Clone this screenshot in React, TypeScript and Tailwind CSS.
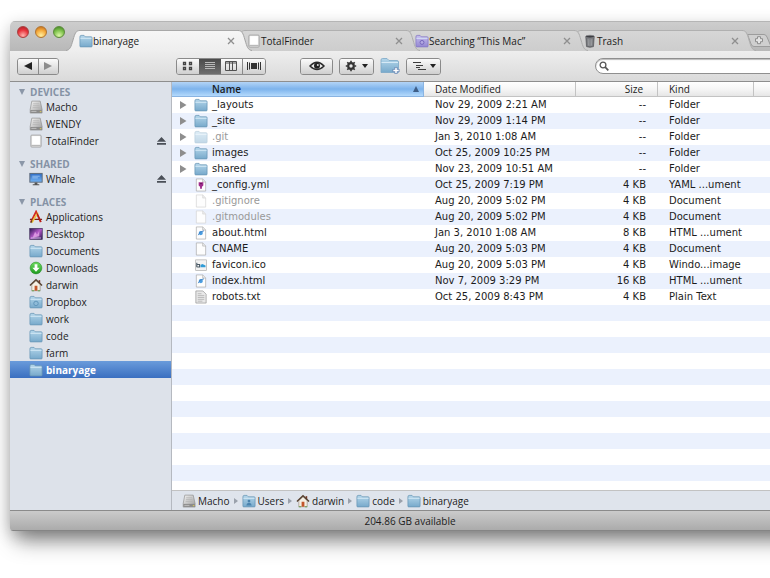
import type { ReactNode } from 'react'

type IconName =
  | 'folder'
  | 'folderDim'
  | 'folderBadge'
  | 'users'
  | 'smart'
  | 'drive'
  | 'volume'
  | 'display'
  | 'apps'
  | 'desktop'
  | 'downloads'
  | 'home'
  | 'trash'
  | 'doc'
  | 'docDim'
  | 'yaml'
  | 'html'
  | 'ico'
  | 'text'

interface SidebarItem {
  label: string
  icon: IconName
  eject?: boolean
  selected?: boolean
}

interface FileRow {
  name: string
  date: string
  size: string
  kind: string
  icon: IconName
  hidden?: boolean
}

const sections: { title: string; items: SidebarItem[] }[] = [
  {
    title: 'DEVICES',
    items: [
      { label: 'Macho', icon: 'drive' },
      { label: 'WENDY', icon: 'drive' },
      { label: 'TotalFinder', icon: 'volume', eject: true },
    ],
  },
  { title: 'SHARED', items: [{ label: 'Whale', icon: 'display', eject: true }] },
  {
    title: 'PLACES',
    items: [
      { label: 'Applications', icon: 'apps' },
      { label: 'Desktop', icon: 'desktop' },
      { label: 'Documents', icon: 'folder' },
      { label: 'Downloads', icon: 'downloads' },
      { label: 'darwin', icon: 'home' },
      { label: 'Dropbox', icon: 'folderBadge' },
      { label: 'work', icon: 'folder' },
      { label: 'code', icon: 'folder' },
      { label: 'farm', icon: 'folder' },
      { label: 'binaryage', icon: 'folder', selected: true },
    ],
  },
]

const files: FileRow[] = [
  { name: '_layouts', date: 'Nov 29, 2009 2:21 AM', size: '--', kind: 'Folder', icon: 'folder' },
  { name: '_site', date: 'Nov 29, 2009 1:14 PM', size: '--', kind: 'Folder', icon: 'folder' },
  { name: '.git', date: 'Jan 3, 2010 1:08 AM', size: '--', kind: 'Folder', icon: 'folderDim', hidden: true },
  { name: 'images', date: 'Oct 25, 2009 10:25 PM', size: '--', kind: 'Folder', icon: 'folder' },
  { name: 'shared', date: 'Nov 23, 2009 10:51 AM', size: '--', kind: 'Folder', icon: 'folder' },
  { name: '_config.yml', date: 'Oct 25, 2009 7:19 PM', size: '4 KB', kind: 'YAML ...ument', icon: 'yaml' },
  { name: '.gitignore', date: 'Aug 20, 2009 5:02 PM', size: '4 KB', kind: 'Document', icon: 'docDim', hidden: true },
  { name: '.gitmodules', date: 'Aug 20, 2009 5:02 PM', size: '4 KB', kind: 'Document', icon: 'docDim', hidden: true },
  { name: 'about.html', date: 'Jan 3, 2010 1:08 AM', size: '8 KB', kind: 'HTML ...ument', icon: 'html' },
  { name: 'CNAME', date: 'Aug 20, 2009 5:03 PM', size: '4 KB', kind: 'Document', icon: 'doc' },
  { name: 'favicon.ico', date: 'Aug 20, 2009 5:03 PM', size: '4 KB', kind: 'Windo...image', icon: 'ico' },
  { name: 'index.html', date: 'Nov 7, 2009 3:29 PM', size: '16 KB', kind: 'HTML ...ument', icon: 'html' },
  { name: 'robots.txt', date: 'Oct 25, 2009 8:43 PM', size: '4 KB', kind: 'Plain Text', icon: 'text' },
]

const crumbs: { label: string; icon: IconName }[] = [
  { label: 'Macho', icon: 'drive' },
  { label: 'Users', icon: 'users' },
  { label: 'darwin', icon: 'home' },
  { label: 'code', icon: 'folder' },
  { label: 'binaryage', icon: 'folder' },
]

const tabs: { label: string; icon: IconName; layer: string }[] = [
  { label: 'binaryage', icon: 'folder', layer: 'z-40' },
  { label: 'TotalFinder', icon: 'volume', layer: '-ml-[18px] z-30' },
  { label: 'Searching “This Mac”', icon: 'smart', layer: '-ml-[18px] z-20' },
  { label: 'Trash', icon: 'trash', layer: '-ml-[18px] z-10' },
]

function Gradients() {
  return (
    <svg width="0" height="0" className="absolute" aria-hidden="true">
      <defs>
        <linearGradient id="g-folder" x1="0" y1="0" x2="0" y2="1">
          <stop offset="0" stopColor="#b4d6ea" />
          <stop offset="1" stopColor="#77a9cb" />
        </linearGradient>
        <linearGradient id="g-smart" x1="0" y1="0" x2="0" y2="1">
          <stop offset="0" stopColor="#c6bdee" />
          <stop offset="1" stopColor="#9488d2" />
        </linearGradient>
        <linearGradient id="g-metal" x1="0" y1="0" x2="1" y2="1">
          <stop offset="0" stopColor="#f2f2f2" />
          <stop offset="1" stopColor="#9b9b9b" />
        </linearGradient>
        <linearGradient id="g-screen" x1="0" y1="0" x2="0" y2="1">
          <stop offset="0" stopColor="#2d6bc4" />
          <stop offset="1" stopColor="#74b4f4" />
        </linearGradient>
        <linearGradient id="g-aurora" x1="0" y1="0" x2="1" y2="1">
          <stop offset="0" stopColor="#2a1550" />
          <stop offset="0.5" stopColor="#b45ac8" />
          <stop offset="1" stopColor="#2a1550" />
        </linearGradient>
        <linearGradient id="g-down" x1="0" y1="0" x2="0" y2="1">
          <stop offset="0" stopColor="#6fdc62" />
          <stop offset="1" stopColor="#1c9a1e" />
        </linearGradient>
        <linearGradient id="g-tab-on" x1="0" y1="0" x2="0" y2="1">
          <stop offset="0" stopColor="#f6f6f6" />
          <stop offset="1" stopColor="#eeeeee" />
        </linearGradient>
        <linearGradient id="g-tab-off" x1="0" y1="0" x2="0" y2="1">
          <stop offset="0" stopColor="#d6d6d6" />
          <stop offset="1" stopColor="#cdcdcd" />
        </linearGradient>
      </defs>
    </svg>
  )
}

function FolderShape({ fill = 'url(#g-folder)', stroke = '#6795b5' }: { fill?: string; stroke?: string }) {
  return (
    <>
      <path d="M1 3.2Q1 1.5 2.2 1.5H5.4L6.8 3H13q1 0 1 1V13q0 .8-.8.8H1.8Q1 13.800 1 13Z" fill={fill} stroke={stroke} strokeWidth=".8" />
      <path d="M1.500 4.600H13.500" stroke="#dceefa" strokeWidth=".9" />
    </>
  )
}

function DocShape({ stroke = '#a5a5a5' }: { stroke?: string }) {
  return (
    <>
      <path d="M2.500 1H9.500L12.500 4.200V14H2.500Z" fill="#fdfdfd" stroke={stroke} strokeWidth=".7" />
      <path d="M9.300 1V4.400H12.500" fill="#e9e9e9" stroke={stroke} strokeWidth=".6" />
    </>
  )
}

const art: Record<IconName, ReactNode> = {
  folder: <FolderShape />,
  folderDim: (
    <g opacity=".45">
      <FolderShape />
    </g>
  ),
  folderBadge: (
    <>
      <FolderShape />
      <circle cx="7.500" cy="9" r="2.400" fill="#8fbbd8" stroke="#5f93b8" />
    </>
  ),
  users: (
    <>
      <FolderShape />
      <circle cx="7.500" cy="7.600" r="1.500" fill="#4b83ae" />
      <path d="M4.600 12.200Q4.800 9.500 7.500 9.500T10.400 12.200Z" fill="#4b83ae" />
    </>
  ),
  smart: (
    <>
      <FolderShape fill="url(#g-smart)" stroke="#8377c4" />
      <circle cx="7.500" cy="9" r="2.100" fill="#b3a9e2" stroke="#7264b8" />
    </>
  ),
  drive: (
    <>
      <path d="M3 1.200H12L14 10V14H1.300V10Z" fill="url(#g-metal)" stroke="#8d8d8d" strokeWidth=".7" />
      <path d="M1.500 10.600H13.800V13.800H1.500Z" fill="#8b8b8b" />
      <path d="M4.500 4H10.700M4.300 6H11M4 8H11.300" stroke="#b0b0b0" strokeWidth=".7" />
      <path d="M2.500 12.200H8" stroke="#c9c9c9" strokeWidth=".9" />
      <rect x="11.600" y="12" width="1.600" height="1" fill="#e2cf55" />
    </>
  ),
  volume: (
    <>
      <rect x="2" y="1.200" width="11" height="12.800" rx="1" fill="#e6e6e6" stroke="#959595" strokeWidth=".8" />
      <rect x="3.300" y="2.300" width="8.400" height="9" fill="#fff" />
      <path d="M2.500 12.300H12.500" stroke="#b4b4b4" />
    </>
  ),
  display: (
    <>
      <rect x=".9" y="1.500" width="13.200" height="9.400" fill="url(#g-screen)" stroke="#5c6877" />
      <path d="M3.500 4.500H11.500M3.500 6.300H9.500" stroke="#a8d0f8" strokeWidth=".8" />
      <path d="M6 11.200H9V13H11V14.200H4V13H6Z" fill="#555" />
    </>
  ),
  apps: (
    <>
      <path d="M2 13 7.600 1.800 12.600 13" fill="none" stroke="#d42b22" strokeWidth="2" />
      <path d="M1 10H14" stroke="#7d2118" strokeWidth="1.500" />
      <path d="M3 13.400 9.600 2.800" stroke="#f0c13a" strokeWidth="1.800" />
      <path d="M8.500 3.500 12.800 12.500" stroke="#b01d18" strokeWidth="1.300" />
      <path d="M1.800 14 3.400 11.300" stroke="#4a3a20" strokeWidth="1.100" />
    </>
  ),
  desktop: (
    <>
      <rect x=".8" y="1.500" width="13.400" height="11.800" fill="url(#g-aurora)" stroke="#3a2a55" strokeWidth=".7" />
      <path d="M4 11.500 6.500 5 8.500 8 11 4.500V10Z" fill="#e6a5ea" opacity=".8" />
      <path d="M2 11.800H13" stroke="#d6d0e8" strokeWidth=".9" />
    </>
  ),
  downloads: (
    <>
      <circle cx="7.500" cy="7.500" r="6.300" fill="url(#g-down)" stroke="#278a27" strokeWidth=".6" />
      <path d="M6 3.500H9V7.200H11.400L7.500 11.600 3.600 7.200H6Z" fill="#fff" />
    </>
  ),
  home: (
    <>
      <path d="M3 7V13.600H12V7L7.500 3Z" fill="#f5efe4" stroke="#8b7b6a" strokeWidth=".6" />
      <path d="M10.300 2.300H12V5.500H10.300Z" fill="#7b3b28" />
      <path d="M1 8 7.500 1.800 14 8" fill="none" stroke="#56402f" strokeWidth="1.500" />
      <path d="M6 8.300H9V13.600H6Z" fill="#c2562b" />
      <path d="M3 13.700H5.500M9.500 13.700H12" stroke="#5a9a3a" strokeWidth=".9" />
    </>
  ),
  trash: (
    <>
      <path d="M3 3H12L11.200 13.500Q7.500 15 3.800 13.500Z" fill="#77797d" stroke="#4b4c50" strokeWidth=".7" />
      <ellipse cx="7.500" cy="2.800" rx="4.700" ry="1.500" fill="#3d3e42" stroke="#8d8f93" strokeWidth=".7" />
      <path d="M5.500 5.500 5.800 12.500M7.500 5.800V12.800M9.500 5.500 9.200 12.500" stroke="#b3b5b9" strokeWidth=".7" />
    </>
  ),
  doc: <DocShape />,
  docDim: <DocShape stroke="#d2d2d2" />,
  yaml: (
    <>
      <DocShape />
      <path d="M5 4.500H10V8L8.500 9.500V11.500H6.500V9.500L5 8Z" fill="#a02c8c" />
      <path d="M6.500 6H8.500" stroke="#5a1550" />
    </>
  ),
  html: (
    <>
      <DocShape />
      <circle cx="7.300" cy="7.600" r="2.200" fill="#4b9de0" />
      <path d="M4.600 9.800Q5.500 5.500 10.600 5.200" fill="none" stroke="#3f82c6" />
    </>
  ),
  ico: (
    <>
      <rect x="1.800" y="2" width="11.600" height="11.500" fill="#f3f3f3" stroke="#a8a8a8" strokeWidth=".7" />
      <path d="M3 5V10M3.500 7H6V9.700H3.500" fill="none" stroke="#4a5a66" strokeWidth="1.200" />
      <path d="M7 9.900V7.500L9 6.300 12.300 8V9.900Z" fill="#2f9bd6" />
    </>
  ),
  text: (
    <>
      <path d="M2 1H9.500L13 4.500V14H2Z" fill="#e8e8e8" stroke="#9a9a9a" strokeWidth=".8" />
      <path d="M4 4H8M4 6H11M4 8H11M4 10H11M4 12H9" stroke="#a3a3a3" strokeWidth=".7" />
    </>
  ),
}

function Icon({ name }: { name: IconName }) {
  return (
    <svg viewBox="0 0 15 15" className="h-[14px] w-[14px] shrink-0" aria-hidden="true">
      {art[name]}
    </svg>
  )
}

function Tab({ label, icon, layer, active }: { label: string; icon: IconName; layer: string; active: boolean }) {
  const fill = active ? 'url(#g-tab-on)' : 'url(#g-tab-off)'
  const stroke = active ? '#a2a2a2' : '#acacac'
  const left = active ? 'C4 20 5 17 7 10S10 .5 14 .5' : 'C4 20 4 16 5 10S7 .5 11 .5H14'
  return (
    <div className={`relative flex h-[21px] w-[186px] shrink-0 ${layer}`}>
      <svg viewBox="0 0 14 21" className="h-[21px] w-[14px] shrink-0" aria-hidden="true">
        <path d={`M0 20.500${left}V21H0Z`} fill={fill} />
        <path d={`M0 20.500${left}`} fill="none" stroke={stroke} />
      </svg>
      <div
        className={`-ml-px flex min-w-0 flex-1 items-center border-t pr-1 ${
          active ? 'border-[#a8a8a8] bg-gradient-to-b from-[#f6f6f6] to-[#eeeeee]' : 'border-[#b0b0b0] bg-gradient-to-b from-[#d6d6d6] to-[#cdcdcd]'
        }`}
      >
        <button role="tab" aria-selected={active} className="flex min-w-0 flex-1 items-center text-left whitespace-nowrap">
          <Icon name={icon} />
          {label}
        </button>
        <button aria-label={`Close ${label}`} className="shrink-0">
          <svg viewBox="0 0 8 8" className="h-2 w-2" stroke="#8f8f8f" strokeWidth="1.300">
            <path d="M1 1 7 7M7 1 1 7" />
          </svg>
        </button>
      </div>
      <svg viewBox="0 0 14 21" className="-ml-px h-[21px] w-[14px] shrink-0" aria-hidden="true">
        <path d="M14 21C10 20 9 17 7 10S4 .5 0 .5V21Z" fill={fill} />
        <path d="M14 20.500C10 20 9 17 7 10S4 .5 0 .5" fill="none" stroke={stroke} />
      </svg>
    </div>
  )
}

function TabBar() {
  return (
    <div className="flex h-[30px] items-end border-t border-[#b5b5b5] bg-gradient-to-b from-[#cdcdcd] to-[#b8b8b8]">
      <div className="flex w-14 shrink-0 gap-[6px] self-start pt-1 pl-[7px]">
        <button aria-label="Close" className="h-3 w-3 shrink-0 rounded-full border border-[#a8403f] bg-[radial-gradient(circle_at_50%_85%,#ffb5b0,#e8343c_55%,#a51d26)]" />
        <button aria-label="Minimize" className="h-3 w-3 shrink-0 rounded-full border border-[#b07430] bg-[radial-gradient(circle_at_50%_85%,#fff0a0,#f5a93a_55%,#b8641c)]" />
        <button aria-label="Zoom" className="h-3 w-3 shrink-0 rounded-full border border-[#5d8a3c] bg-[radial-gradient(circle_at_50%_85%,#dcf8a8,#7cc04a_55%,#3c7c22)]" />
      </div>
      <div role="tablist" className="flex">
        {tabs.map((tab, i) => (
          <Tab key={tab.label} {...tab} active={i === 0} />
        ))}
      </div>
      <button aria-label="New tab" className="-ml-[10px] shrink-0 pb-[3px]">
        <svg viewBox="0 0 28 15" className="h-[15px] w-7" fill="none">
          <path d="M1.500 1.500H18Q20 1.500 21 4L25 13.500H8Q6 13.500 5 11Z" fill="#cfcfcf" stroke="#9c9c9c" />
          <path d="M9.500 5.700H11.500V3.700H14.500V5.700H16.500V8.700H14.500V10.700H11.500V8.700H9.500Z" fill="#e4e4e4" stroke="#8d8d8d" />
        </svg>
      </button>
    </div>
  )
}

const key = 'flex h-[15px] items-center justify-center bg-gradient-to-b from-[#fbfbfb] to-[#cfcfcf]'
const frame = 'shrink-0 rounded-[3px] border border-[#8a8a8a] overflow-hidden'

function Toolbar() {
  return (
    <div className="flex h-[31px] items-center border-b border-[#8e8e8e] bg-gradient-to-b from-[#eeeeee] to-[#dadada] pl-[7px]">
      <div className={`flex w-[42px] ${frame}`}>
        <button aria-label="Back" className={`flex-1 border-r border-[#8a8a8a] ${key}`}>
          <svg viewBox="0 0 8 8" className="h-2 w-2">
            <path d="M0 4 8 0V8Z" fill="#222" />
          </svg>
        </button>
        <button aria-label="Forward" className={`flex-1 ${key}`}>
          <svg viewBox="0 0 8 8" className="h-2 w-2">
            <path d="M8 4 0 0V8Z" fill="#8c8c8c" />
          </svg>
        </button>
      </div>

      <div className={`ml-[117px] flex w-[90px] ${frame}`}>
        <button aria-label="Icon view" className={`flex-1 ${key}`}>
          <svg viewBox="0 0 12 10" className="h-[10px] w-3" fill="none" stroke="#454545" strokeWidth="1.300">
            <path d="M1.500 1.500h2v2h-2zM7.500 1.500h2v2h-2zM1.500 6.500h2v2h-2zM7.500 6.500h2v2h-2z" />
          </svg>
        </button>
        <button aria-label="List view" className="flex h-[15px] flex-1 items-center justify-center bg-gradient-to-b from-[#4b4b4b] to-[#6e6e6e]">
          <svg viewBox="0 0 12 10" className="h-[10px] w-3" stroke="#b8b8b8">
            <path d="M1 1.500H11M1 3.500H11M1 5.500H11M1 7.500H11" />
          </svg>
        </button>
        <button aria-label="Column view" className={`flex-1 border-r border-[#8a8a8a] ${key}`}>
          <svg viewBox="0 0 12 10" className="h-[10px] w-3" fill="none" stroke="#505050">
            <path d="M.5.5H11.500V9.500H.5ZM.5 2H11.500M4.500 1V9.500M7.500 1V9.500" />
          </svg>
        </button>
        <button aria-label="Cover Flow" className={`flex-1 ${key}`}>
          <svg viewBox="0 0 14 10" className="h-[10px] w-[14px]" fill="#333">
            <path d="M4 2H10V8H4ZM0 1H1V9H0ZM2 1.500H3V8.500H2ZM11 1.500H12V8.500H11ZM13 1H14V9H13Z" />
          </svg>
        </button>
      </div>

      <button aria-label="Quick Look" className={`ml-[34px] w-[33px] ${frame}`}>
        <span className={key}>
          <svg viewBox="0 0 16 10" className="h-[10px] w-4">
            <path d="M1 5Q8-2.500 15 5Q8 12 1 5Z" fill="#eee" stroke="#2b2b2b" strokeWidth="1.500" />
            <circle cx="8" cy="4.800" r="3" fill="#222" />
            <circle cx="8.800" cy="4" r="1" fill="#ddd" />
          </svg>
        </span>
      </button>

      <button aria-label="Action" className={`ml-[6px] w-[35px] ${frame}`}>
        <span className={`gap-[5px] ${key}`}>
          <svg viewBox="0 0 12 12" className="h-3 w-3" fill="none" stroke="#333">
            <circle cx="6" cy="6" r="2.800" strokeWidth="2.200" />
            <path d="M6 .8V2.500M6 9.500V11.200M.8 6H2.500M9.500 6H11.200M2.300 2.300 3.500 3.500M8.500 8.500 9.700 9.700M9.700 2.300 8.500 3.500M3.500 8.500 2.300 9.700" strokeWidth="1.600" />
          </svg>
          <Caret />
        </span>
      </button>

      <button aria-label="New Folder" className="ml-[6px] shrink-0">
        <svg viewBox="0 0 20 18" className="h-[18px] w-5">
          <path d="M1 3Q1 1.500 2.500 1.500H7L9 3.500H17Q18.500 3.500 18.500 5V15.500H1Z" fill="url(#g-folder)" stroke="#7ba7c6" strokeWidth=".8" />
          <path d="M1.500 5.500H18" stroke="#d5e9f6" />
          <path d="M16 10V17M12.500 13.500H19.500" stroke="#6b88b5" strokeWidth="3" />
          <path d="M16 10.800V16.200M13.300 13.500H18.700" stroke="#fff" strokeWidth="1.500" />
        </svg>
      </button>

      <button aria-label="Arrange" className={`ml-[6px] w-[35px] ${frame}`}>
        <span className={`gap-[3px] ${key}`}>
          <svg viewBox="0 0 15 10" className="h-[10px] w-[15px]" stroke="#3d3d3d">
            <path d="M1 1.500H9M4 4.500H11M4 6.500H8M6 8.500H14" />
          </svg>
          <Caret />
        </span>
      </button>

      <label className="ml-[154px] flex h-4 min-w-0 flex-1 items-center rounded-l-full border border-[#8f8f8f] bg-white pl-[3px] shadow-[inset_0_1px_1px_#bbbbbb]">
        <svg viewBox="0 0 10 10" className="h-[10px] w-[10px] shrink-0" fill="none" stroke="#555">
          <circle cx="4" cy="4" r="2.900" strokeWidth="1.300" />
          <path d="M6.200 6.200 9.300 9.300" strokeWidth="1.700" />
        </svg>
        <input type="search" aria-label="Search" className="min-w-0 flex-1 bg-transparent px-1 outline-none" />
      </label>
    </div>
  )
}

function Caret() {
  return (
    <svg viewBox="0 0 6 4" className="h-1 w-[6px]">
      <path d="M0 0H6L3 4Z" fill="#222" />
    </svg>
  )
}

function Sidebar() {
  return (
    <nav className="flex w-[162px] shrink-0 flex-col gap-[5px] border-r border-[#b5b9c0] bg-[#dde2ea]">
      {sections.map((section) => (
        <section key={section.title}>
          <h2 className="flex h-4 items-center gap-1 pt-[3px] pl-2 font-bold text-[#8592a5]">
            <svg viewBox="0 0 6 6" className="mx-px h-[6px] w-[6px]">
              <path d="M0 0H6L3 6Z" fill="#8b97a8" />
            </svg>
            {section.title}
          </h2>
          <ul>
            {section.items.map((item) => (
              <li
                key={item.label}
                className={`flex h-[17px] items-center pr-[5px] pl-[19px] ${
                  item.selected ? 'bg-gradient-to-b from-[#6a9bdb] to-[#3a6fc0] font-bold text-white' : ''
                }`}
              >
                <button className="flex flex-1 items-center gap-[3px] text-left">
                  <Icon name={item.icon} />
                  {item.label}
                </button>
                {item.eject && (
                  <button aria-label={`Eject ${item.label}`}>
                    <svg viewBox="0 0 9 8" className="h-2 w-[9px]" fill="#4a4f57">
                      <path d="M4.500 0 9 4.800H0ZM0 6H9V7.800H0Z" />
                    </svg>
                  </button>
                )}
              </li>
            ))}
          </ul>
        </section>
      ))}
    </nav>
  )
}

const headCell = 'border-r border-b border-[#c3c3c3] bg-gradient-to-b from-white via-[#f6f6f6] to-[#e6e6e6] p-0'

function FileList() {
  return (
    <div className="min-h-0 flex-1 overflow-hidden bg-[repeating-linear-gradient(to_bottom,#ffffff_0_16px,#ebf1fd_16px_32px)] bg-[position:0_15px] font-['DejaVu_Sans',sans-serif] font-normal">
      <table className="w-full table-fixed border-separate border-spacing-0">
        <colgroup>
          <col />
          <col className="w-[152px]" />
          <col className="w-[82px]" />
          <col className="w-24" />
          <col className="w-14" />
        </colgroup>
        <thead className="font-['Open_Sans',sans-serif]">
          <tr className="h-[15px] leading-[14px]">
            <th className="border-r border-b border-[#8ab4e2] bg-gradient-to-b from-[#b3d4f6] via-[#7db3ec] to-[#b4dafc] p-0 pr-1 pl-10 text-left font-semibold">
              <span className="flex items-center justify-between">
                Name
                <svg viewBox="0 0 6 6" className="h-[6px] w-[6px]">
                  <path d="M3 0 6 6H0Z" fill="#3f5f88" />
                </svg>
              </span>
            </th>
            <th className={`${headCell} pl-[11px] text-left font-medium`}>Date Modified</th>
            <th className={`${headCell} pr-[14px] text-right font-medium`}>Size</th>
            <th className={`${headCell} pl-[11px] text-left font-medium`}>Kind</th>
            <th className={headCell} aria-label="Label" />
          </tr>
        </thead>
        <tbody>
          {files.map((file) => (
            <tr key={file.name} className="h-4 leading-4 whitespace-nowrap">
              <td className="p-0">
                <div className="flex h-4 items-center pl-[7px]">
                  <span className="w-[15px] shrink-0">
                    {file.kind === 'Folder' && (
                      <svg viewBox="0 0 8 8" className="h-2 w-2">
                        <path d="M1 0 7.500 4 1 8Z" fill="#8e8e8e" />
                      </svg>
                    )}
                  </span>
                  <Icon name={file.icon} />
                  <span className={`pl-1 ${file.hidden ? 'text-[#999999]' : ''}`}>{file.name}</span>
                </div>
              </td>
              <td className="p-0 pl-[11px]">{file.date}</td>
              <td className="p-0 pr-3 text-right">{file.size}</td>
              <td className="p-0 pl-[11px]">{file.kind}</td>
              <td className="p-0" />
            </tr>
          ))}
        </tbody>
      </table>
    </div>
  )
}

function PathBar() {
  return (
    <nav aria-label="Path" className="flex h-5 shrink-0 items-center gap-1 border-t border-[#c2c2c2] bg-[#dfe4ec] pl-[10px]">
      {crumbs.map((crumb, i) => (
        <div key={crumb.label} className="flex items-center gap-1">
          {i > 0 && (
            <svg viewBox="0 0 4 6" className="h-[6px] w-1">
              <path d="M0 0 4 3 0 6Z" fill="#9aa1ab" />
            </svg>
          )}
          <button className="flex items-center gap-[2px]">
            <Icon name={crumb.icon} />
            {crumb.label}
          </button>
        </div>
      ))}
    </nav>
  )
}

export default function App() {
  return (
    <div className="h-screen overflow-hidden bg-white pt-[21px] pb-[47px] pl-[10px] font-['Open_Sans',sans-serif] text-[10px] leading-[14px] font-medium text-[#1c1c1c]">
      <Gradients />
      {/* the window runs on past the right edge of the screen */}
      <div className="h-full w-[calc(100%+40px)] rounded-t-[5px] rounded-b-[3px] shadow-[0_16px_20px_-6px_rgba(0,0,0,0.42),0_4px_16px_rgba(0,0,0,0.22)]">
        <div className="flex h-full flex-col overflow-hidden rounded-t-[5px] rounded-b-[3px]">
          <TabBar />
          <Toolbar />
          <div className="flex min-h-0 flex-1">
            <Sidebar />
            <main className="flex min-w-0 flex-1 flex-col">
              <FileList />
              <PathBar />
            </main>
          </div>
          <footer className="flex h-[21px] shrink-0 items-center justify-center border-t border-b border-t-[#8b8b8b] border-b-[#858585] bg-gradient-to-b from-[#cbcbcb] to-[#ababab]">
            204.86 GB available
          </footer>
        </div>
      </div>
    </div>
  )
}
